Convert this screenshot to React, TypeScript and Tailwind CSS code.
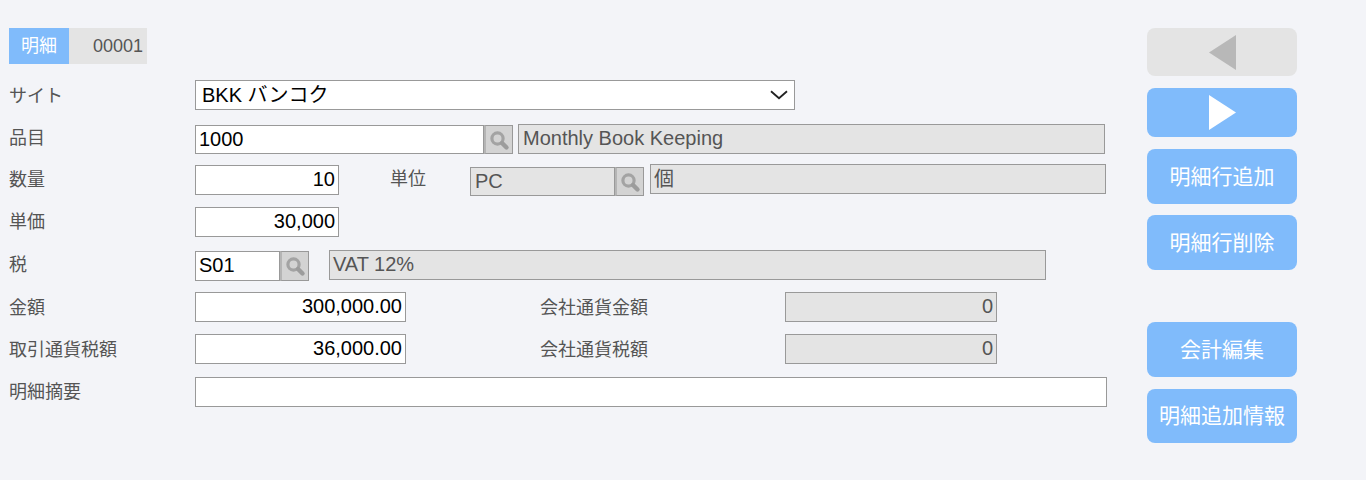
import type { ReactNode } from 'react'

const font = "font-['Liberation_Sans','Noto_Sans_CJK_JP',sans-serif]"

function Label({ children, className = '' }: { children: ReactNode; className?: string }) {
  return <div className={`text-[18px] leading-[24px] text-[#555] ${className}`}>{children}</div>
}

function Field({ value, className = '', right = false, disabled = false }: { value: string; className?: string; right?: boolean; disabled?: boolean }) {
  return (
    <div
      className={`flex items-center border border-[#999] text-[20px] leading-none whitespace-nowrap ${
        right ? 'justify-end pr-[3px]' : 'pl-[3px]'
      } ${disabled ? 'bg-[#e4e4e4] text-[#555]' : 'bg-white text-black'} ${className}`}
    >
      {value}
    </div>
  )
}

function LookupButton() {
  return (
    <div className="flex h-full w-[29px] items-center justify-center border border-l-2 border-[#999] border-l-[#b5b5b5] bg-[#d3d3d3]">
      <svg width="22" height="22" viewBox="0 0 22 22" fill="none">
        <circle cx="9.5" cy="9.5" r="5.6" stroke="#a3a3a3" strokeWidth="3.2" />
        <path d="M14 14l4.5 4.5" stroke="#9c9c9c" strokeWidth="4.4" strokeLinecap="round" />
      </svg>
    </div>
  )
}

function SideButton({ children, className = '' }: { children: ReactNode; className?: string }) {
  return (
    <button className={`flex w-[150px] items-center justify-center rounded-[8px] bg-[#80bbfb] text-[21px] text-white ${className}`}>
      {children}
    </button>
  )
}

export default function App() {
  return (
    <div className={`flex h-[480px] w-[1366px] bg-[#f3f4f8] pl-[9px] pt-[28px] ${font}`}>
      <div className="w-[1138px]">
        <div className="flex h-[36px] w-[138px] bg-[#e4e4e4] text-[18px]">
          <div className="flex w-[60px] items-center justify-center bg-[#80bbfb] text-white">明細</div>
          <div className="flex flex-1 items-center justify-end pr-[4px] text-[#555]">00001</div>
        </div>

        <div className="mt-[16px] flex h-[30px] items-center">
          <Label className="mt-[1px] w-[186px]">サイト</Label>
          <div className="flex h-[30px] w-[600px] items-center justify-between border border-[#999] bg-white px-[6px] text-[20px] text-black">
            <span>BKK バンコク</span>
            <svg width="18" height="10" viewBox="0 0 18 10" fill="none">
              <path d="M1 1.2l8 7 8-7" stroke="#222" strokeWidth="1.8" />
            </svg>
          </div>
        </div>

        <div className="mt-[14px] flex h-[30px] items-start">
          <Label className="mt-[2px] w-[186px]">品目</Label>
          <div className="mt-[1px] flex h-[29px]">
            <Field value="1000" className="w-[289px] pb-[2px]" />
            <LookupButton />
          </div>
          <Field value="Monthly Book Keeping" disabled className="ml-[5px] h-[30px] w-[587px] pb-[2px] pl-[4px]" />
        </div>

        <div className="mt-[10px] flex h-[32px] items-start">
          <Label className="mt-[4px] w-[186px]">数量</Label>
          <Field value="10" right className="mt-[1px] h-[30px] w-[144px] pb-[2px]" />
          <Label className="mt-[3px] ml-[51px] w-[80px]">単位</Label>
          <div className="mt-[3px] flex h-[29px]">
            <Field value="PC" disabled className="w-[145px] pb-[2px] pl-[4px]" />
            <LookupButton />
          </div>
          <Field value="個" disabled className="ml-[6px] h-[30px] w-[456px]" />
        </div>

        <div className="mt-[11px] flex h-[30px] items-center">
          <Label className="w-[186px]">単価</Label>
          <Field value="30,000" right className="h-[30px] w-[144px] pb-[2px]" />
        </div>

        <div className="mt-[13px] flex h-[31px] items-start">
          <Label className="mt-[3px] w-[186px]">税</Label>
          <div className="mt-[1px] flex h-[30px]">
            <Field value="S01" className="w-[85px] pb-[2px]" />
            <LookupButton />
          </div>
          <Field value="VAT 12%" disabled className="ml-[20px] h-[30px] w-[717px] pb-[2px]" />
        </div>

        <div className="mt-[11px] flex h-[30px] items-center">
          <Label className="mt-[1px] w-[186px]">金額</Label>
          <Field value="300,000.00" right className="h-[30px] w-[211px] pb-[2px]" />
          <Label className="mt-[1px] ml-[134px] w-[245px]">会社通貨金額</Label>
          <Field value="0" right disabled className="h-[30px] w-[212px] pb-[2px]" />
        </div>

        <div className="mt-[12px] flex h-[30px] items-center">
          <Label className="mt-[1px] w-[186px]">取引通貨税額</Label>
          <Field value="36,000.00" right className="h-[30px] w-[211px] pb-[2px]" />
          <Label className="mt-[1px] ml-[134px] w-[245px]">会社通貨税額</Label>
          <Field value="0" right disabled className="h-[30px] w-[212px] pb-[2px]" />
        </div>

        <div className="mt-[13px] flex h-[30px] items-center">
          <Label className="w-[186px]">明細摘要</Label>
          <Field value="" className="h-[30px] w-[912px]" />
        </div>
      </div>

      <div className="flex flex-col">
        <SideButton className="h-[48px] !bg-[#e4e4e4]">
          <svg width="27" height="35" viewBox="0 0 27 35">
            <polygon points="27,0 27,35 0,17.5" fill="#b8b8b8" />
          </svg>
        </SideButton>
        <SideButton className="mt-[12px] h-[49px]">
          <svg width="27" height="35" viewBox="0 0 27 35">
            <polygon points="0,0 0,35 27,17.5" fill="#fff" />
          </svg>
        </SideButton>
        <SideButton className="mt-[12px] h-[55px]">明細行追加</SideButton>
        <SideButton className="mt-[11px] h-[55px]">明細行削除</SideButton>
        <SideButton className="mt-[52px] h-[55px]">会計編集</SideButton>
        <SideButton className="mt-[12px] h-[54px]">明細追加情報</SideButton>
      </div>
    </div>
  )
}
